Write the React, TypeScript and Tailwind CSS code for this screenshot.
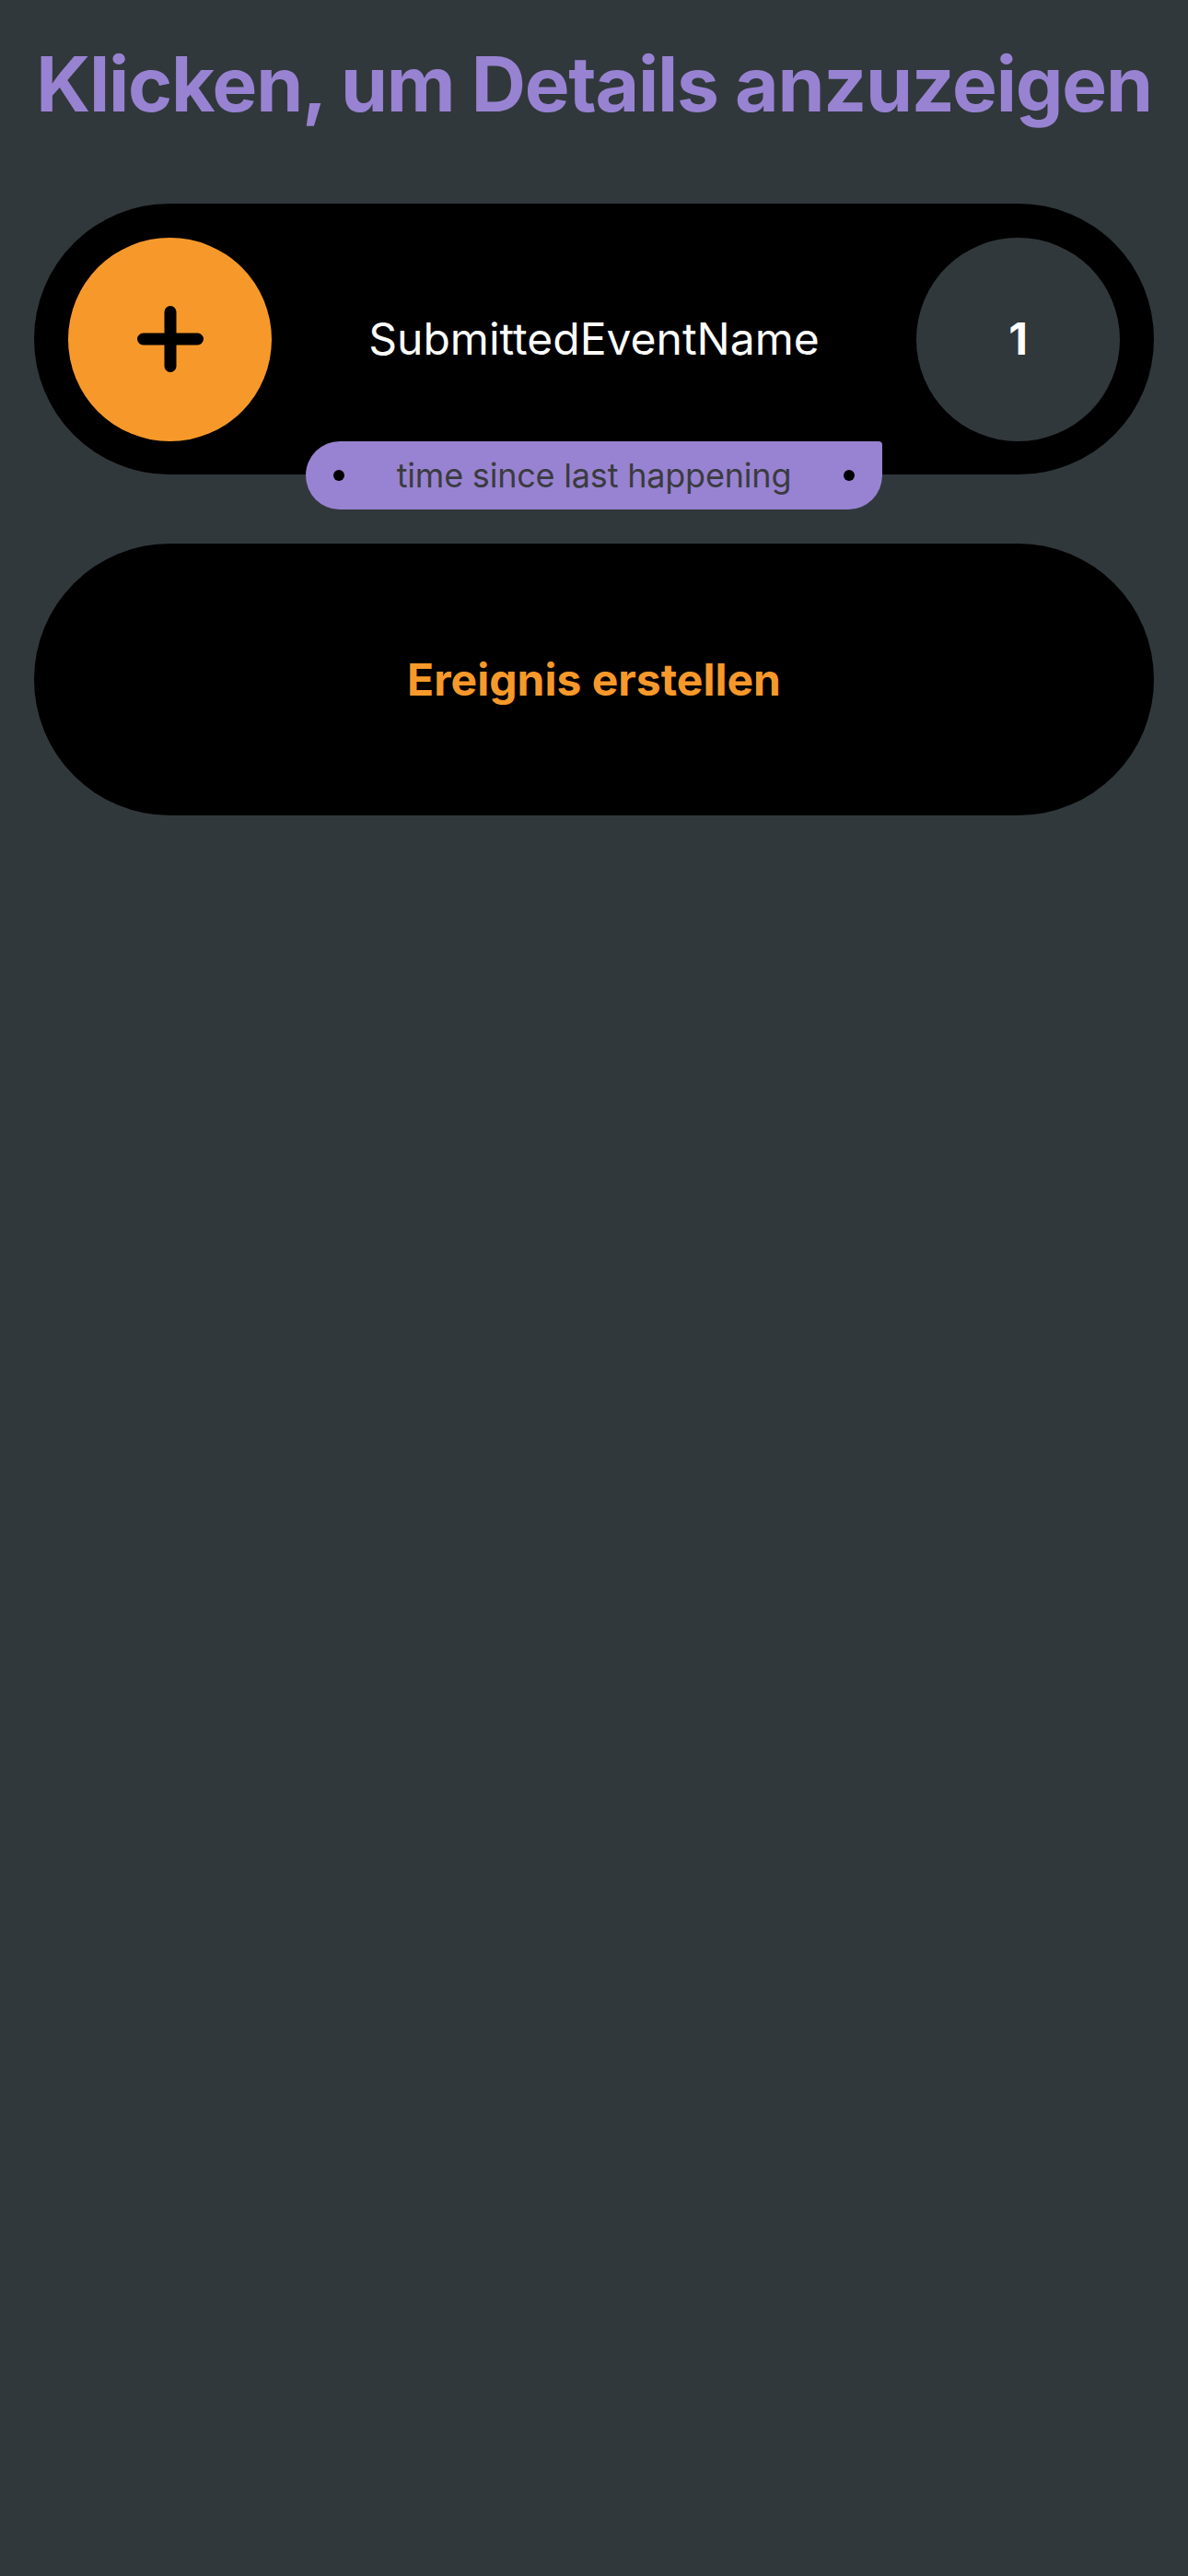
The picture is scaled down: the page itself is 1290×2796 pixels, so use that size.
import React from "react";

function PlusIcon() {
    return (
        <svg width="72" height="72" viewBox="0 0 72 72" fill="none">
            <path d="M36 6.5V65.5M6.5 36H65.5" stroke="#000" strokeWidth="13" strokeLinecap="round" />
        </svg>
    );
}

function EventCard({ name, count }: { name: string; count: number }) {
    return (
        <div className="relative flex items-center h-[294px] px-[37px] bg-black rounded-full">
            <div className="flex items-center justify-center w-[221px] h-[221px] shrink-0 rounded-full bg-[#f7992a]">
                <PlusIcon />
            </div>
            <div className="flex-1 text-center text-white text-[48px] leading-none">{name}</div>
            <div className="flex items-center justify-center w-[221px] h-[221px] shrink-0 rounded-full bg-[#31383b] text-white text-[48px] font-bold leading-none">
                {count}
            </div>
            <div className="absolute left-1/2 -translate-x-1/2 bottom-[-38px] flex items-center justify-between w-[626px] h-[74px] px-[30px] bg-[#9883d2] rounded-[37px] rounded-tr-[4px]">
                <span className="w-[12px] h-[12px] rounded-full bg-black" />
                <span className="text-[36px] leading-none text-[#3b3b3f] tracking-[-0.2px]">time since last happening</span>
                <span className="w-[12px] h-[12px] rounded-full bg-black" />
            </div>
        </div>
    );
}

export default function App() {
    return (
        <div className="min-h-screen bg-[#31383b] px-[37px] pt-[42px]" style={{ fontFamily: "Inter, 'Noto Sans', sans-serif" }}>
            <h1 className="text-center text-[82px] leading-[100px] font-bold text-[#9883d2] whitespace-nowrap tracking-[-1.2px]">
                Klicken, um Details anzuzeigen
            </h1>
            <div className="mt-[79px]">
                <EventCard name="SubmittedEventName" count={1} />
            </div>
            <button className="mt-[75px] flex items-center justify-center w-full h-[295px] bg-black rounded-full">
                <span className="text-[48px] font-bold leading-none text-[#f7992a]">Ereignis erstellen</span>
            </button>
        </div>
    );
}
